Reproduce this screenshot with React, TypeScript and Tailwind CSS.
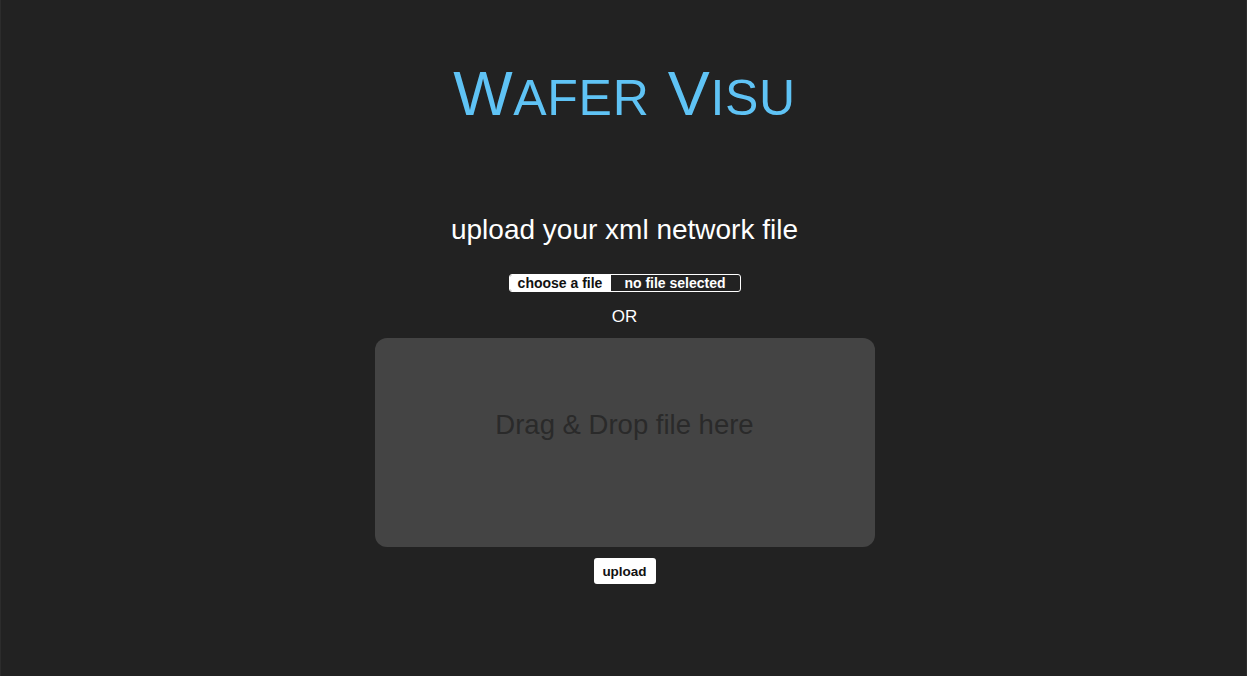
import { useState } from 'react'

function FilePicker() {
  const [name, setName] = useState<string | null>(null)

  return (
    <label className="flex h-[18px] w-[232px] cursor-pointer overflow-hidden rounded-[3px] border border-white text-[14px] font-bold leading-none">
      <input
        className="hidden"
        type="file"
        accept=".xml"
        onChange={(e) => setName(e.target.files?.[0]?.name ?? null)}
      />
      <span className="flex w-[101px] items-center justify-center bg-white text-[#111]">choose a file</span>
      <span className="flex flex-1 items-center justify-center truncate text-white">
        {name ?? 'no file selected'}
      </span>
    </label>
  )
}

export default function App() {
  return (
    <div className="flex min-h-[676px] flex-col items-center border-x border-[#2c2c2c] bg-[#222222] pl-[2px] font-['Liberation_Sans',Arial,sans-serif]">
      <h1 className="mt-[62px] text-[63px] font-normal leading-none tracking-[0.7px] text-[#5fc3f5]">
        W<span className="text-[50px]">AFER</span> V<span className="text-[50px]">ISU</span>
      </h1>

      <h2 className="mt-[91px] text-[28px] leading-none text-white">upload your xml network file</h2>

      <div className="mt-[30px]">
        <FilePicker />
      </div>

      <div className="mt-[16px] text-[17px] leading-none text-white">OR</div>

      <div className="mt-[13px] flex h-[209px] w-[500px] items-center justify-center rounded-[12px] bg-[#444444]">
        <span className="-mt-[35px] text-[27.5px] text-[#2a2a2a]">Drag &amp; Drop file here</span>
      </div>

      <button className="mt-[11px] h-[26px] w-[62px] rounded-[3px] bg-white pt-[2px] text-[13.5px] font-bold text-[#111]">
        upload
      </button>
    </div>
  )
}
